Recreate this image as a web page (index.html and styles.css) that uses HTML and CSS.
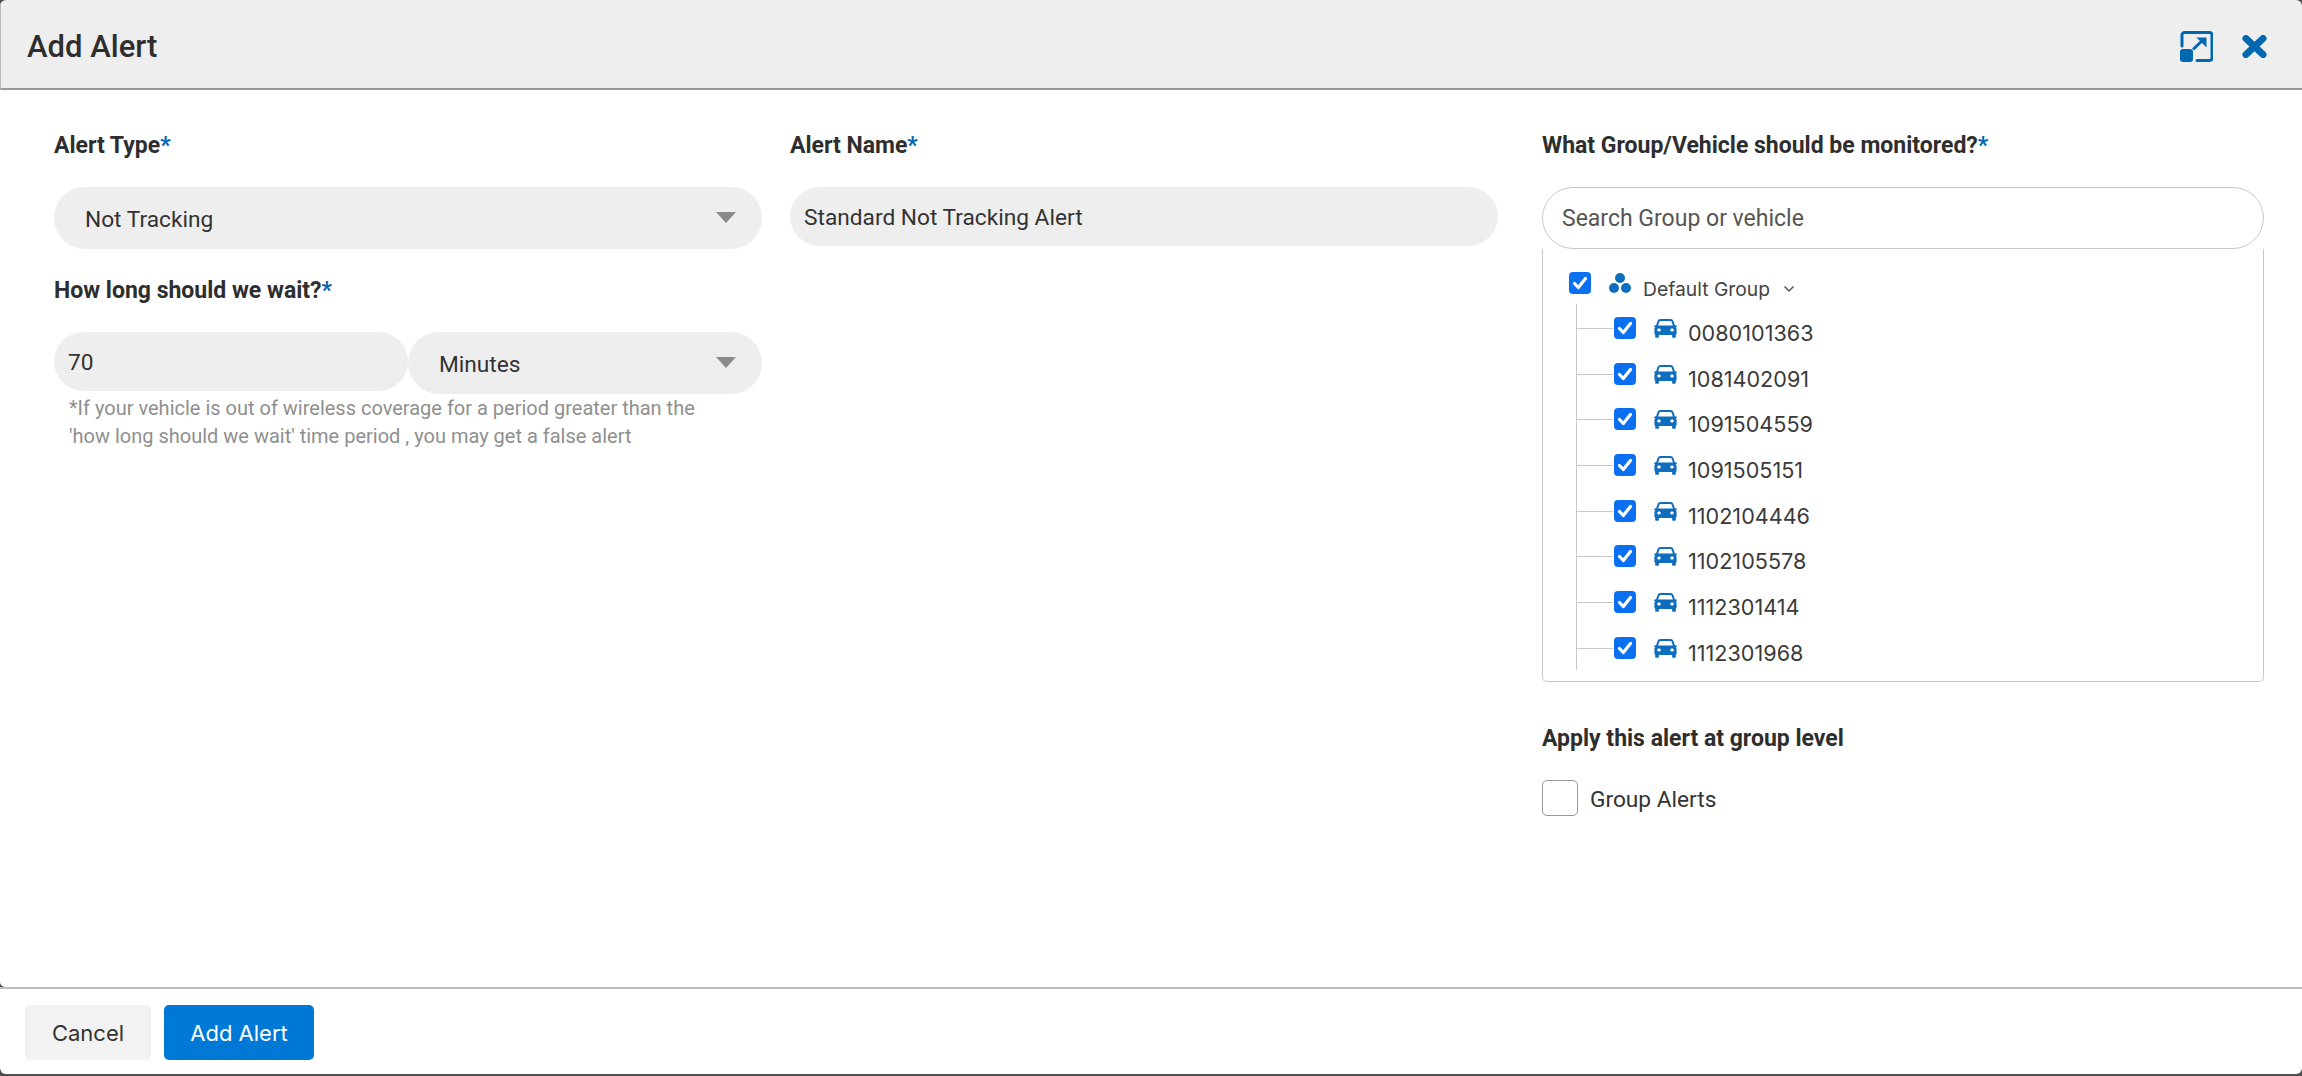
FILE: index.html
```html
<!DOCTYPE html>
<html lang="en">
<head>
    <meta charset="UTF-8">
    <meta name="viewport" content="width=device-width, initial-scale=1.0">
    <title>Add Alert</title>
    <link rel="stylesheet" href="styles.css">
</head>
<body>
    <svg class="sprites" width="0" height="0">
        <symbol id="car" viewBox="0 0 23 19">
            <path fill="currentColor" fill-rule="evenodd" d="M6.500 0h10c1.400 0 2.400 0.800 2.900 2l1.500 4.200 1.300 0.200c0.500 0.100 0.800 0.400 0.800 0.800 0 0.500-0.400 0.800-0.900 0.800h-0.400c0.600 0.700 0.900 1.500 0.900 2.400v4.200c0 0.600-0.300 1-0.800 1.200v2c0 0.600-0.400 1-1 1h-1.700c-0.600 0-1-0.400-1-1v-1.800H4.900v1.800c0 0.600-0.400 1-1 1H2.200c-0.600 0-1-0.400-1-1v-2c-0.500-0.200-0.800-0.600-0.800-1.200v-4.200c0-0.900 0.300-1.700 0.900-2.400H0.900C0.400 8 0 7.700 0 7.200c0-0.400 0.300-0.700 0.800-0.800l1.300-0.200L3.600 2C4.100 0.800 5.100 0 6.500 0zM6.500 2c-0.500 0-0.900 0.300-1.100 0.800L4.100 6.500h14.800l-1.300-3.700C17.400 2.300 17 2 16.500 2h-10zM5 9.400c-1 0-1.800 0.600-1.800 1.500s0.800 1.500 1.800 1.500 1.800-0.600 1.800-1.500-0.800-1.500-1.800-1.500zM18 9.400c-1 0-1.800 0.600-1.800 1.500s0.800 1.500 1.800 1.500 1.800-0.600 1.800-1.500-0.800-1.500-1.800-1.500z"/>
        </symbol>
        <symbol id="check" viewBox="0 0 22 22">
            <path fill="none" stroke="#fff" stroke-width="3.200" stroke-linecap="round" stroke-linejoin="round" d="M5.500 11.500l3.800 4L16.500 6.500"/>
        </symbol>
    </svg>

    <div class="modal">
        <header class="modal-header">
            <h1>Add Alert</h1>
            <div class="header-icons">
                <svg class="icon-expand" width="33" height="31" viewBox="0 0 33 31">
                    <path fill="none" stroke="currentColor" stroke-width="3" stroke-linecap="round" stroke-linejoin="round" d="M2 15V4a2.500 2.500 0 0 1 2.500-2.500h25A2.500 2.500 0 0 1 32 4v23a2.500 2.500 0 0 1-2.500 2.500H17"/>
                    <rect fill="currentColor" x="0" y="18" width="13" height="13" rx="3"/>
                    <path fill="none" stroke="currentColor" stroke-width="3" d="M13 18.500L24 8"/>
                    <path fill="currentColor" d="M16.500 6.500H26.500V16.500Z"/>
                </svg>
                <svg class="icon-close" width="25" height="23" viewBox="0 0 25 23">
                    <path fill="none" stroke="currentColor" stroke-width="7" stroke-linecap="round" d="M4 3.500L21 19.500M21 3.500L4 19.500"/>
                </svg>
            </div>
        </header>

        <main class="modal-body">
            <div class="col col-type">
                <label class="field-label">Alert Type<span class="req">*</span></label>
                <div class="select-box">
                    <span>Not Tracking</span>
                    <i class="caret"></i>
                </div>

                <label class="field-label wait-label">How long should we wait?<span class="req">*</span></label>
                <div class="wait-row">
                    <div class="text-box wait-input">70</div>
                    <div class="select-box wait-select">
                        <span>Minutes</span>
                        <i class="caret"></i>
                    </div>
                </div>
                <p class="hint">*If your vehicle is out of wireless coverage for a period greater than the 'how long should we wait' time period , you may get a false alert</p>
            </div>

            <div class="col col-name">
                <label class="field-label">Alert Name<span class="req">*</span></label>
                <div class="text-box">Standard Not Tracking Alert</div>
            </div>

            <div class="col col-group">
                <label class="field-label">What Group/Vehicle should be monitored?<span class="req">*</span></label>
                <div class="search-box">Search Group or vehicle</div>
                <div class="tree">
                    <div class="tree-root">
                        <span class="check"><svg width="22" height="22"><use href="#check"/></svg></span>
                        <svg class="group-icon" width="22" height="20" viewBox="0 0 22 20">
                            <circle cx="11" cy="5" r="5" fill="currentColor"/>
                            <circle cx="5" cy="15" r="5" fill="currentColor"/>
                            <circle cx="17" cy="15" r="5" fill="currentColor"/>
                        </svg>
                        <span class="root-name">Default Group</span>
                        <svg class="chevron" width="12" height="8" viewBox="0 0 12 8">
                            <path fill="none" stroke="#555" stroke-width="1.500" d="M1.500 1.500L6 6l4.500-4.500"/>
                        </svg>
                    </div>
                    <ul class="tree-list">
                        <li><span class="check"><svg width="22" height="22"><use href="#check"/></svg></span><svg class="car" width="23" height="19"><use href="#car"/></svg><span>0080101363</span></li>
                        <li><span class="check"><svg width="22" height="22"><use href="#check"/></svg></span><svg class="car" width="23" height="19"><use href="#car"/></svg><span>1081402091</span></li>
                        <li><span class="check"><svg width="22" height="22"><use href="#check"/></svg></span><svg class="car" width="23" height="19"><use href="#car"/></svg><span>1091504559</span></li>
                        <li><span class="check"><svg width="22" height="22"><use href="#check"/></svg></span><svg class="car" width="23" height="19"><use href="#car"/></svg><span>1091505151</span></li>
                        <li><span class="check"><svg width="22" height="22"><use href="#check"/></svg></span><svg class="car" width="23" height="19"><use href="#car"/></svg><span>1102104446</span></li>
                        <li><span class="check"><svg width="22" height="22"><use href="#check"/></svg></span><svg class="car" width="23" height="19"><use href="#car"/></svg><span>1102105578</span></li>
                        <li><span class="check"><svg width="22" height="22"><use href="#check"/></svg></span><svg class="car" width="23" height="19"><use href="#car"/></svg><span>1112301414</span></li>
                        <li><span class="check"><svg width="22" height="22"><use href="#check"/></svg></span><svg class="car" width="23" height="19"><use href="#car"/></svg><span>1112301968</span></li>
                    </ul>
                </div>

                <label class="field-label apply-label">Apply this alert at group level</label>
                <div class="group-alerts">
                    <span class="empty-check"></span>
                    <span>Group Alerts</span>
                </div>
            </div>
        </main>

        <footer class="modal-footer">
            <button class="btn btn-cancel" type="button">Cancel</button>
            <button class="btn btn-add" type="button">Add Alert</button>
        </footer>
    </div>
</body>
</html>
```

FILE: styles.css
```css
:root {
    --blue: #0067b1;
    --check-blue: #0b6ff2;
    --field-bg: #eeeeee;
    --border: #c9c9c9;
    --text: #2b2b2b;
}

* {
    margin: 0;
    padding: 0;
    box-sizing: border-box;
}

html,
body {
    height: 100%;
}

body {
    background: #4f4f4f;
    font-family: Roboto, "Liberation Sans", sans-serif;
    color: var(--text);
    overflow: hidden;
}

.sprites {
    display: block;
    height: 0;
}

.modal {
    height: 1074px;
    display: flex;
    flex-direction: column;
    border-radius: 6px;
    overflow: hidden;
}

.modal-header {
    height: 90px;
    flex: none;
    display: flex;
    align-items: center;
    justify-content: space-between;
    padding: 5px 35px 0 26px;
    background: #eeeeee;
    border-bottom: 2px solid #9a9a9a;
    border-left: 1px solid #bbb;
}

.modal-header h1 {
    font-size: 31px;
    font-weight: 500;
    color: #2e2e2e;
}

.header-icons {
    display: flex;
    align-items: center;
    gap: 29px;
    color: var(--blue);
}

.modal-body {
    flex: 1;
    display: flex;
    padding: 0 38px 0 54px;
    background: #fff;
    border-bottom-left-radius: 5px;
}

.col-type {
    width: 736px;
    padding-right: 28px;
}

.col-name {
    width: 752px;
    padding-right: 44px;
}

.col-group {
    width: 722px;
}

.field-label {
    display: block;
    height: 36px;
    margin-top: 38px;
    margin-bottom: 23px;
    font-size: 23px;
    font-weight: 700;
    line-height: 36px;
    color: #2e2e2e;
}

.req {
    color: var(--blue);
}

.select-box,
.text-box {
    display: flex;
    align-items: center;
    background: var(--field-bg);
    font-size: 22.700px;
    color: #333;
}

.select-box {
    height: 62px;
    border-radius: 31px;
    justify-content: space-between;
    padding: 2px 26px 0 31px;
}

.select-box .caret {
    margin-top: -3px;
}

.text-box {
    height: 59px;
    border-radius: 30px;
    padding: 2px 14px 0;
}

.caret {
    width: 0;
    height: 0;
    border-left: 10px solid transparent;
    border-right: 10px solid transparent;
    border-top: 11px solid #8a8a8a;
}

.wait-label {
    margin-top: 24px;
}

.wait-row {
    display: flex;
    align-items: flex-start;
}

.wait-input,
.wait-select {
    width: 354px;
}

.hint {
    padding: 0 40px 0 15px;
    font-size: 20px;
    line-height: 28px;
    color: #8f8f8f;
}

.search-box {
    height: 62px;
    margin-top: 1px;
    padding: 0 19px;
    display: flex;
    align-items: center;
    border: 1.500px solid var(--border);
    border-radius: 31px;
    font-size: 23px;
    color: #555;
    background: #fff;
}

.tree {
    height: 433px;
    padding: 23px 26px 0;
    border: 1.500px solid var(--border);
    border-top: 0;
    border-radius: 0 0 5px 5px;
    font-family: Inter, Roboto, sans-serif;
}

.tree-root {
    display: flex;
    align-items: flex-start;
    height: 32px;
    color: #444;
    font-size: 19.300px;
}

.check {
    width: 22px;
    height: 22px;
    flex: none;
    border-radius: 4px;
    background: var(--check-blue);
}

.check svg {
    display: block;
}

.group-icon {
    margin: 1px 0 0 18px;
    color: #0f6dbd;
}

.root-name {
    margin: 5px 0 0 12px;
    line-height: 24px;
}

.chevron {
    margin: 13px 0 0 13px;
}

.tree-list {
    list-style: none;
    margin-left: 7px;
    border-left: 1px solid var(--border);
}

.tree-list li {
    position: relative;
    height: 45.700px;
    display: flex;
    align-items: flex-start;
    padding: 13px 0 0 37px;
    font-size: 21.600px;
    color: #3a3a3a;
}

.tree-list li::before {
    content: "";
    position: absolute;
    left: 0;
    top: 24px;
    width: 36px;
    border-top: 1px solid var(--border);
}

.car {
    margin: 2px 0 0 18px;
    color: #0f6dbd;
}

.tree-list li > span:last-child {
    margin: 4px 0 0 11px;
    line-height: 24px;
}

.apply-label {
    margin-top: 39px;
}

.group-alerts {
    display: flex;
    align-items: center;
    gap: 12px;
    font-size: 22.700px;
    color: #333;
}

.group-alerts span:last-child {
    padding-top: 2px;
}

.empty-check {
    width: 36px;
    height: 36px;
    border: 1.500px solid #999;
    border-radius: 5px;
}

.modal-footer {
    flex: none;
    height: 87px;
    display: flex;
    align-items: flex-start;
    gap: 13px;
    padding: 16px 25px 0;
    background: #fff;
    border-top: 2px solid #bdbdbd;
}

.btn {
    height: 55px;
    border: none;
    border-radius: 5px;
    font-family: Inter, Roboto, sans-serif;
    font-size: 22px;
}

.btn-cancel {
    width: 126px;
    background: #f2f2f2;
    color: #333;
}

.btn-add {
    width: 150px;
    background: #0078d6;
    color: #fff;
}
```
